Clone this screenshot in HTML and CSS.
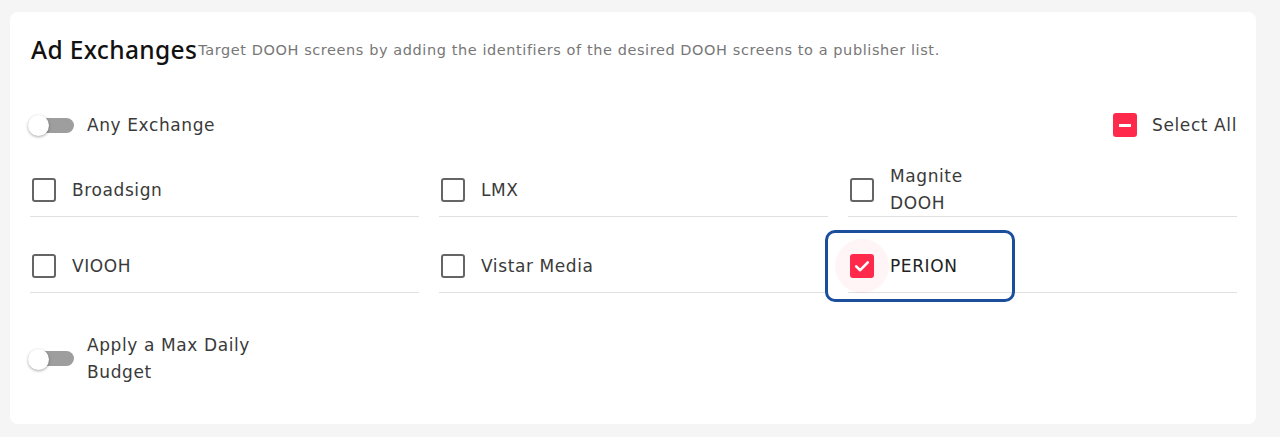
FILE: index.html
```html
<!DOCTYPE html>
<html lang="en">
<head>
<meta charset="utf-8">
<title>Ad Exchanges</title>
<link rel="stylesheet" href="styles.css">
</head>
<body>
<section class="card">
  <header class="head">
    <h2 class="title">Ad Exchanges</h2>
    <p class="desc">Target DOOH screens by adding the identifiers of the desired DOOH screens to a publisher list.</p>
  </header>

  <div class="controls">
    <label class="toggle">
      <span class="track"><span class="thumb"></span></span>
      <span class="toggle-label">Any Exchange</span>
    </label>
    <label class="select-all">
      <span class="box box-on"><span class="dash"></span></span>
      <span class="sa-label">Select All</span>
    </label>
  </div>

  <div class="grid">
    <label class="item"><span class="box"></span><span class="item-label">Broadsign</span></label>
    <label class="item"><span class="box"></span><span class="item-label">LMX</span></label>
    <label class="item"><span class="box"></span><span class="item-label narrow">Magnite DOOH</span></label>
    <label class="item"><span class="box"></span><span class="item-label">VIOOH</span></label>
    <label class="item"><span class="box"></span><span class="item-label">Vistar Media</span></label>
    <label class="item item-hl">
      <span class="box-wrap"><span class="ripple"></span><span class="box box-on">
        <svg viewBox="0 0 24 24" width="24" height="24"><path d="M6.2 12.4 L10.2 16.2 L17.8 8.4" fill="none" stroke="#fff" stroke-width="2.6" stroke-linecap="round" stroke-linejoin="round"/></svg>
      </span></span>
      <span class="item-label dark">PERION</span>
      <span class="highlight"></span>
    </label>
  </div>

  <label class="toggle budget">
    <span class="track"><span class="thumb"></span></span>
    <span class="toggle-label wrap">Apply a Max Daily Budget</span>
  </label>
</section>
</body>
</html>
```

FILE: styles.css
```css
* { box-sizing: border-box; }
html, body { margin: 0; padding: 0; }
body {
  background: #f5f5f5;
  font-family: "DejaVu Sans", "Open Sans", sans-serif;
  color: #3a3a3a;
  width: 1280px;
  height: 437px;
  overflow: hidden;
  padding: 12px 24px 0 10px;
}
.card {
  background: #fff;
  border-radius: 8px;
  padding: 24px 19px 39px 20px;
  height: 412px;
}
.head {
  display: flex;
  align-items: flex-end;
  height: 28px;
}
.title {
  margin: 0 0 0 1px;
  font-family: "Noto Sans", sans-serif;
  font-weight: 500;
  font-size: 24.5px;
  color: #111;
  letter-spacing: 0.35px;
  line-height: 28px;
  white-space: nowrap;
}
.desc {
  margin: 0 0 0 1px;
  padding-bottom: 4px;
  font-size: 14.5px;
  line-height: 20px;
  letter-spacing: 0.58px;
  color: #777;
  white-space: nowrap;
}
.controls {
  display: flex;
  justify-content: space-between;
  align-items: center;
  height: 40px;
  margin-top: 41px;
}
.toggle {
  display: flex;
  align-items: center;
  gap: 13px;
}
.track {
  position: relative;
  width: 44px;
  height: 20px;
  display: flex;
  align-items: center;
  justify-content: flex-end;
}
.track::before {
  content: "";
  width: 36px;
  height: 15px;
  border-radius: 8px;
  background: #9e9e9e;
}
.thumb {
  position: absolute;
  left: -2px;
  top: 0;
  width: 21px;
  height: 21px;
  border-radius: 50%;
  background: #fff;
  box-shadow: 0 1px 3px rgba(0,0,0,0.35);
}
.toggle-label, .sa-label, .item-label {
  font-size: 17px;
  letter-spacing: 0.6px;
  line-height: 27px;
  color: #3a3a3a;
  padding-top: 1px;
}
.toggle-label.wrap { width: 170px; }
.select-all {
  display: flex;
  align-items: center;
  gap: 15px;
}
.box {
  width: 24px;
  height: 24px;
  border: 2.5px solid #656565;
  border-radius: 3px;
  flex: none;
  display: flex;
  align-items: center;
  justify-content: center;
  margin-left: 2px;
}
.box-on {
  background: #ff2a4b;
  border-color: #ff2a4b;
}
.dash {
  width: 12px;
  height: 3px;
  background: #fff;
}
.box-on svg { display: block; margin: -2.5px; }
.grid {
  display: grid;
  grid-template-columns: repeat(3, 1fr);
  column-gap: 20px;
  row-gap: 22px;
  margin-top: 18px;
}
.item {
  position: relative;
  display: flex;
  align-items: center;
  gap: 16px;
  height: 54px;
  border-bottom: 1px solid #e0e0e0;
}
.item-label.narrow { width: 96px; }
.item-label.dark { color: #222; }
.box-wrap {
  position: relative;
  display: flex;
}
.ripple {
  position: absolute;
  left: -13px;
  top: -15px;
  width: 54px;
  height: 54px;
  border-radius: 50%;
  background: rgba(255, 42, 75, 0.05);
}
.box-wrap .box { position: relative; }
.highlight {
  position: absolute;
  left: -23px;
  top: -9px;
  width: 190px;
  height: 72px;
  border: 3px solid #1b4f9c;
  border-radius: 10px;
  pointer-events: none;
}
.budget {
  margin-top: 38px;
}
```
